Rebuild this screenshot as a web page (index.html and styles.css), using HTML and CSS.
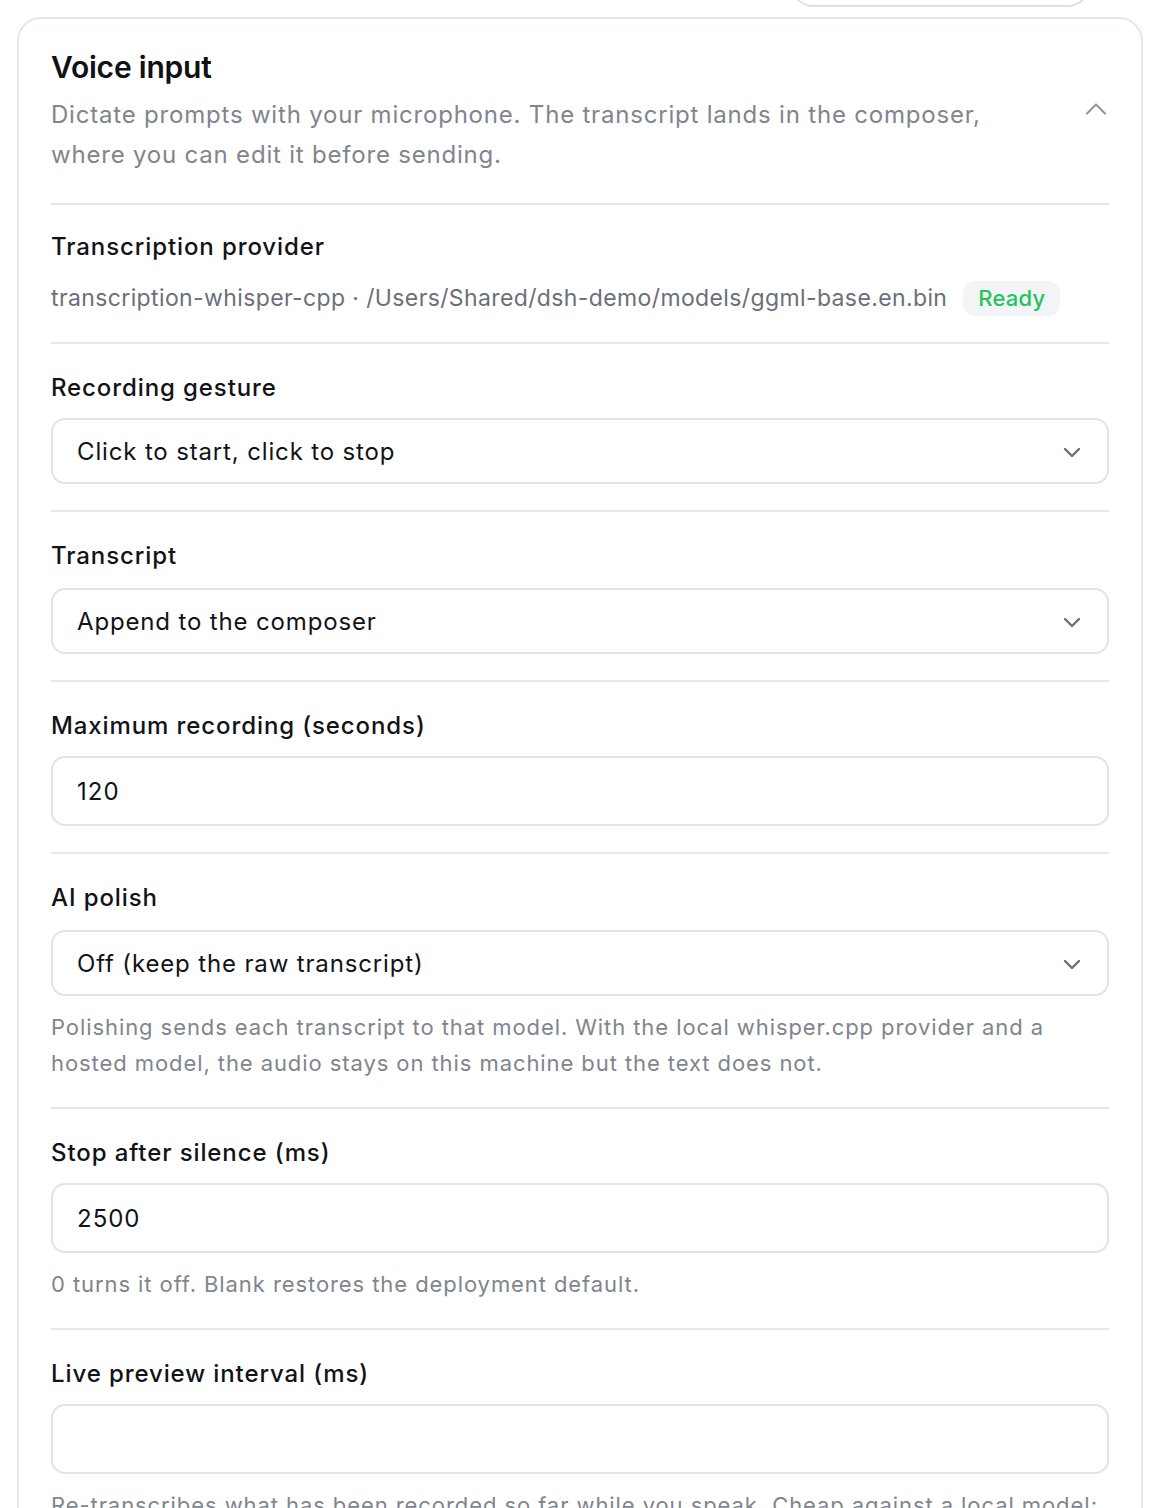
FILE: index.html
```html
<!DOCTYPE html>
<html lang="en">
<head>
<meta charset="utf-8">
<title>Voice input</title>
<link rel="stylesheet" href="styles.css">
</head>
<body>
<div class="page">
  <div class="topbar"><div class="top-pill"></div></div>
  <section class="card">
    <header class="card-head">
      <div class="head-text">
        <h2 class="title">Voice input</h2>
        <p class="desc">Dictate prompts with your microphone. The transcript lands in the composer, where you can edit it before sending.</p>
      </div>
      <svg class="chev-up" width="22" height="14" viewBox="0 0 22 14" aria-hidden="true"><path d="M2 11.5 L11 2.5 L20 11.5" fill="none" stroke="#8b9099" stroke-width="2" stroke-linecap="round" stroke-linejoin="round"/></svg>
    </header>

    <div class="field">
      <div class="label">Transcription provider</div>
      <div class="provider">
        <span class="provider-text">transcription-whisper-cpp · /Users/Shared/dsh-demo/models/ggml-base.en.bin</span>
        <span class="badge">Ready</span>
      </div>
    </div>

    <div class="field">
      <div class="label">Recording gesture</div>
      <div class="select"><span>Click to start, click to stop</span>
        <svg class="chev" width="18" height="11" viewBox="0 0 18 11" aria-hidden="true"><path d="M2 2 L9 9 L16 2" fill="none" stroke="#6b7079" stroke-width="2.4" stroke-linecap="round" stroke-linejoin="round"/></svg>
      </div>
    </div>

    <div class="field">
      <div class="label">Transcript</div>
      <div class="select select-gap"><span>Append to the composer</span>
        <svg class="chev" width="18" height="11" viewBox="0 0 18 11" aria-hidden="true"><path d="M2 2 L9 9 L16 2" fill="none" stroke="#6b7079" stroke-width="2.4" stroke-linecap="round" stroke-linejoin="round"/></svg>
      </div>
    </div>

    <div class="field">
      <div class="label">Maximum recording (seconds)</div>
      <input class="input" type="text" value="120">
    </div>

    <div class="field">
      <div class="label">AI polish</div>
      <div class="select select-gap"><span>Off (keep the raw transcript)</span>
        <svg class="chev" width="18" height="11" viewBox="0 0 18 11" aria-hidden="true"><path d="M2 2 L9 9 L16 2" fill="none" stroke="#6b7079" stroke-width="2.4" stroke-linecap="round" stroke-linejoin="round"/></svg>
      </div>
      <p class="help">Polishing sends each transcript to that model. With the local whisper.cpp provider and a hosted model, the audio stays on this machine but the text does not.</p>
    </div>

    <div class="field">
      <div class="label">Stop after silence (ms)</div>
      <input class="input" type="text" value="2500">
      <p class="help">0 turns it off. Blank restores the deployment default.</p>
    </div>

    <div class="field">
      <div class="label">Live preview interval (ms)</div>
      <input class="input" type="text" value="">
      <p class="help">Re-transcribes what has been recorded so far while you speak. Cheap against a local model; costly against a hosted one.</p>
    </div>
  </section>
</div>
</body>
</html>
```

FILE: styles.css
```css
html, body {
  margin: 0;
  padding: 0;
  background: #ffffff;
}
body {
  font-family: Inter, "Noto Sans", "Liberation Sans", sans-serif;
  color: #111318;
  overflow: hidden;
}
.page {
  padding: 0 17px;
}
.topbar {
  display: flex;
  justify-content: flex-end;
  padding-right: 53px;
  height: 0;
}
.top-pill {
  width: 295px;
  height: 44px;
  margin-top: -41px;
  border: 2px solid #dedfe2;
  border-radius: 22px;
  background: #fff;
}
.card {
  margin-top: 17px;
  border: 2px solid #e3e6ef;
  border-radius: 24px;
  padding: 28px 32px 40px 32px;
  background: #fff;
}
.card-head {
  display: flex;
  align-items: center;
  justify-content: space-between;
  gap: 24px;
  padding-bottom: 28px;
  border-bottom: 2px solid #e5e7eb;
}
.head-text {
  max-width: 960px;
}
.title {
  margin: 0;
  font-size: 30px;
  line-height: 40px;
  font-weight: 600;
  color: #0f1115;
  letter-spacing: -0.2px;
}
.desc {
  margin: 8px 0 0 0;
  font-size: 24px;
  line-height: 40px;
  color: #80858e;
  letter-spacing: 0.8px;
}
.chev-up {
  flex: none;
  margin-right: 2px;
  margin-top: -4px;
}
.field {
  padding: 28px 0 26px 0;
  border-bottom: 2px solid #e5e7eb;
}
.field:first-of-type {
  padding-top: 26px;
}
.field:last-child {
  border-bottom: none;
}
.label {
  font-size: 24px;
  line-height: 32px;
  font-weight: 500;
  color: #111318;
  letter-spacing: 0.9px;
}
.provider {
  display: flex;
  align-items: center;
  margin-top: 17px;
}
.provider-text {
  font-size: 23px;
  line-height: 36px;
  color: #6b6f78;
  letter-spacing: 0.38px;
}
.badge {
  margin-left: 16px;
  height: 35px;
  padding: 0 15px;
  display: inline-flex;
  align-items: center;
  border-radius: 12px;
  background: #f3f4f6;
  color: #22c55e;
  font-size: 22px;
  font-weight: 500;
  letter-spacing: 0.2px;
}
.select {
  margin-top: 14px;
  height: 66px;
  box-sizing: border-box;
  border: 2px solid #e4e4e7;
  border-radius: 14px;
  display: flex;
  align-items: center;
  justify-content: space-between;
  padding: 0 26px 0 24px;
  font-size: 24px;
  color: #111318;
  letter-spacing: 0.85px;
}
.select-gap {
  margin-top: 16px;
}
.chev {
  flex: none;
  margin-top: 2px;
}
.input {
  display: block;
  margin-top: 14px;
  width: 100%;
  height: 70px;
  box-sizing: border-box;
  border: 2px solid #e4e4e7;
  border-radius: 14px;
  padding: 0 24px;
  font-family: inherit;
  font-size: 24px;
  letter-spacing: 1px;
  color: #111318;
  background: #fff;
  outline: none;
}
.help {
  margin: 13px 0 0 0;
  font-size: 22px;
  line-height: 36px;
  color: #80858e;
  letter-spacing: 0.92px;
}
```
